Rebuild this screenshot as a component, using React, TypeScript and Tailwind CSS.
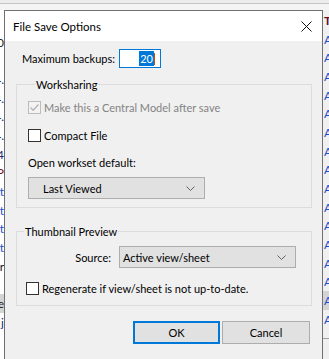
import React from "react";

const leftRows: { t: string; c: string }[] = [
  { t: "", c: "" },
  { t: "0", c: "text-[#202020]" },
  { t: "", c: "" },
  { t: "4.", c: "text-[#1b2a6b]" },
  { t: "4.", c: "text-[#1b2a6b]" },
  { t: "4.", c: "text-[#1b2a6b]" },
  { t: "4.", c: "text-[#1b2a6b]" },
  { t: "4", c: "text-[#1b2a6b]" },
  { t: "P", c: "text-[#7a1020]" },
  { t: "t", c: "text-[#1a4fd0]" },
  { t: "t", c: "text-[#1a4fd0]" },
  { t: "t", c: "text-[#1a4fd0]" },
  { t: "t", c: "text-[#1a4fd0]" },
  { t: "r", c: "text-[#202020]" },
  { t: "", c: "" },
  { t: "e", c: "text-[#202020] bg-[#d4d4d4]" },
  { t: "j", c: "text-[#1b2a6b]" },
];

function Check({ checked, disabled }: { checked?: boolean; disabled?: boolean }) {
  return (
    <span
      className={`flex h-[13px] w-[13px] shrink-0 items-center justify-center border ${
        disabled ? "border-[#bcbcbc] bg-[#f3f3f3]" : "border-[#333333] bg-white"
      }`}
    >
      {checked && (
        <svg width="11" height="11" viewBox="0 0 11 11">
          <path d="M1.5 5.5 L4.2 8.2 L9.5 2.5" fill="none" stroke={disabled ? "#b4b4b4" : "#222"} strokeWidth="1.3" />
        </svg>
      )}
    </span>
  );
}

function Chevron() {
  return (
    <svg width="9" height="5" viewBox="0 0 9 5" className="shrink-0">
      <path d="M0.5 0.5 L4.5 4.5 L8.5 0.5" fill="none" stroke="#606060" strokeWidth="1" />
    </svg>
  );
}

function Select({ value, className }: { value: string; className: string }) {
  return (
    <div
      className={`flex h-[22px] items-center justify-between border border-[#adadad] bg-[#e1e1e1] ${className}`}
    >
      <span className="whitespace-nowrap">{value}</span>
      <Chevron />
    </div>
  );
}

export default function App() {
  return (
    <div className="flex h-[359px] w-[329px] flex-col overflow-hidden bg-[#f0f0f0] font-['Lato',sans-serif] text-[11px] leading-[15px] text-black">
      <div className="h-[10px] shrink-0 bg-[#f4f4f4]">
        <div className="h-[4px] border-b border-[#c4c4c4] bg-[#ececec]" />
      </div>

      <div className="flex min-h-0 flex-1">
        {/* list behind the dialog, left edge */}
        <div className="flex w-[4px] shrink-0 flex-col items-end overflow-hidden bg-white pt-[4px] text-[12px]">
          {leftRows.map((r, i) => (
            <div key={i} className={`flex h-[18.7px] w-[4px] shrink-0 items-center justify-end ${r.c}`}>
              <span className="whitespace-nowrap">{r.t}</span>
            </div>
          ))}
        </div>

        {/* dialog */}
        <div className="flex w-[319px] shrink-0 flex-col border-x border-t border-[#707070] bg-[#f0f0f0]">
          <div className="flex h-[30px] shrink-0 items-center justify-between bg-white pl-[8px] pr-[10px]">
            <span className="text-[11.5px]">File Save Options</span>
            <svg width="11" height="11" viewBox="0 0 11 11">
              <path d="M0.5 0.5 L10.5 10.5 M10.5 0.5 L0.5 10.5" stroke="#111" strokeWidth="1" />
            </svg>
          </div>

          <div className="flex flex-col">
            <div className="mt-[8px] flex h-[19px] items-center pl-[17px]">
              <span className="w-[97px] whitespace-nowrap">Maximum backups:</span>
              <div className="flex h-[19px] w-[42px] items-center justify-end border border-[#0078d7] bg-white pr-[5px]">
                <span className="bg-[#0078d7] px-[1px] text-white">20</span>
                <span className="h-[12px] w-[1px] bg-[#c05010]" />
              </div>
            </div>

            <fieldset className="ml-[11px] mt-[9px] w-[296px] border border-[#dcdcdc] pb-[8px] pl-[11px]">
              <legend className="ml-[7px] px-[1px]">Worksharing</legend>
              <div className="mt-[8px] flex h-[15px] items-center gap-[3px] text-[#838383]">
                <Check checked disabled />
                <span>Make this a Central Model after save</span>
              </div>
              <div className="mt-[13px] flex h-[15px] items-center gap-[3px]">
                <Check />
                <span>Compact File</span>
              </div>
              <div className="mt-[12px]">Open workset default:</div>
              <Select value="Last Viewed" className="mt-[7px] w-[177px] pl-[14px] pr-[9px]" />
            </fieldset>

            <fieldset className="ml-[11px] mt-[16px] w-[296px] border border-[#dcdcdc] pb-[9px]">
              <legend className="ml-[7px] px-[1px]">Thumbnail Preview</legend>
              <div className="mt-[7px] flex items-center">
                <span className="w-[94px] text-right">Source:</span>
                <Select value="Active view/sheet" className="ml-[8px] w-[177px] pl-[3px] pr-[9px]" />
              </div>
              <div className="mt-[13px] flex h-[15px] items-center gap-[3px] pl-[9px]">
                <Check />
                <span>Regenerate if view/sheet is not up-to-date.</span>
              </div>
            </fieldset>

            <div className="mt-[15px] flex justify-end gap-[2px] pr-[12px]">
              <button className="h-[23px] w-[87px] border-2 border-[#0078d7] bg-[#e1e1e1]">OK</button>
              <button className="h-[23px] w-[88px] border border-[#adadad] bg-[#e1e1e1]">Cancel</button>
            </div>
          </div>
        </div>

        {/* list behind the dialog, right edge */}
        <div className="flex min-w-0 flex-1 flex-col overflow-hidden bg-[#f0f0f0] pt-[1px] text-[12px]">
          <div className="flex h-[18.7px] shrink-0 items-center pl-[1px] font-bold text-[#6b0f1a]">T</div>
          {Array.from({ length: 16 }).map((_, i) => (
            <div
              key={i}
              className={`flex h-[18.7px] shrink-0 items-center pl-[1px] text-[#1f4fc8] ${i === 14 ? "bg-[#d4d4d4]" : ""}`}
            >
              A
            </div>
          ))}
          <div className="mt-[9px] border-t border-[#a0a0a0]" />
        </div>
      </div>
    </div>
  );
}
